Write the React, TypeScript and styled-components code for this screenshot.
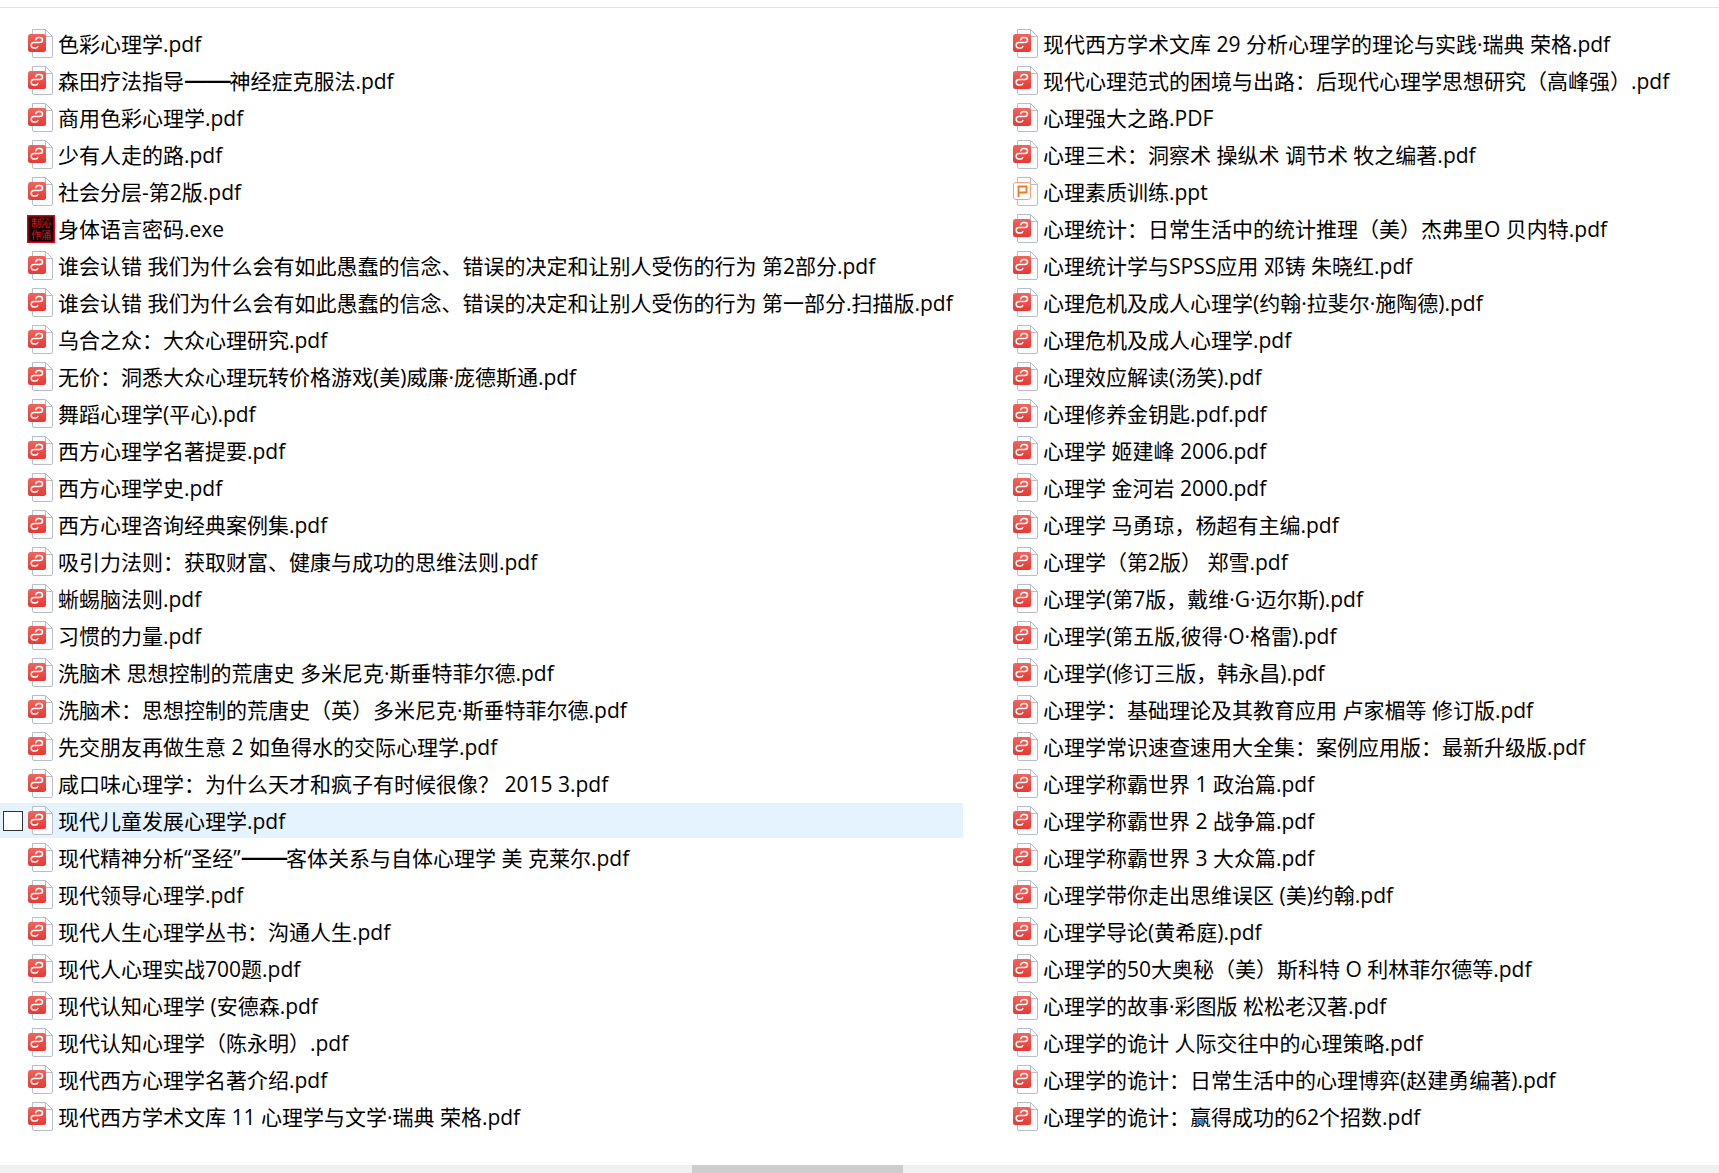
// App.tsx
import styled, { createGlobalStyle } from "styled-components";

const GlobalStyle = createGlobalStyle`
  html, body {
    margin: 0;
    padding: 0;
    background: #fff;
  }
  body {
    font-family: "Open Sans", "Noto Sans CJK SC", sans-serif;
    color: #000;
  }
`;

const leftFiles = [
  "色彩心理学.pdf",
  "森田疗法指导——神经症克服法.pdf",
  "商用色彩心理学.pdf",
  "少有人走的路.pdf",
  "社会分层-第2版.pdf",
  "身体语言密码.exe",
  "谁会认错 我们为什么会有如此愚蠢的信念、错误的决定和让别人受伤的行为 第2部分.pdf",
  "谁会认错 我们为什么会有如此愚蠢的信念、错误的决定和让别人受伤的行为 第一部分.扫描版.pdf",
  "乌合之众：大众心理研究.pdf",
  "无价：洞悉大众心理玩转价格游戏(美)威廉·庞德斯通.pdf",
  "舞蹈心理学(平心).pdf",
  "西方心理学名著提要.pdf",
  "西方心理学史.pdf",
  "西方心理咨询经典案例集.pdf",
  "吸引力法则：获取财富、健康与成功的思维法则.pdf",
  "蜥蜴脑法则.pdf",
  "习惯的力量.pdf",
  "洗脑术 思想控制的荒唐史 多米尼克·斯垂特菲尔德.pdf",
  "洗脑术：思想控制的荒唐史（英）多米尼克·斯垂特菲尔德.pdf",
  "先交朋友再做生意 2 如鱼得水的交际心理学.pdf",
  "咸口味心理学：为什么天才和疯子有时候很像？ 2015 3.pdf",
  "现代儿童发展心理学.pdf",
  "现代精神分析“圣经”——客体关系与自体心理学 美 克莱尔.pdf",
  "现代领导心理学.pdf",
  "现代人生心理学丛书：沟通人生.pdf",
  "现代人心理实战700题.pdf",
  "现代认知心理学 (安德森.pdf",
  "现代认知心理学（陈永明）.pdf",
  "现代西方心理学名著介绍.pdf",
  "现代西方学术文库 11 心理学与文学·瑞典 荣格.pdf",
];

const rightFiles = [
  "现代西方学术文库 29 分析心理学的理论与实践·瑞典 荣格.pdf",
  "现代心理范式的困境与出路：后现代心理学思想研究（高峰强）.pdf",
  "心理强大之路.PDF",
  "心理三术：洞察术 操纵术 调节术 牧之编著.pdf",
  "心理素质训练.ppt",
  "心理统计：日常生活中的统计推理（美）杰弗里O 贝内特.pdf",
  "心理统计学与SPSS应用 邓铸 朱晓红.pdf",
  "心理危机及成人心理学(约翰·拉斐尔·施陶德).pdf",
  "心理危机及成人心理学.pdf",
  "心理效应解读(汤笑).pdf",
  "心理修养金钥匙.pdf.pdf",
  "心理学 姬建峰 2006.pdf",
  "心理学 金河岩 2000.pdf",
  "心理学 马勇琼，杨超有主编.pdf",
  "心理学（第2版） 郑雪.pdf",
  "心理学(第7版，戴维·G·迈尔斯).pdf",
  "心理学(第五版,彼得·O·格雷).pdf",
  "心理学(修订三版，韩永昌).pdf",
  "心理学：基础理论及其教育应用 卢家楣等 修订版.pdf",
  "心理学常识速查速用大全集：案例应用版：最新升级版.pdf",
  "心理学称霸世界 1 政治篇.pdf",
  "心理学称霸世界 2 战争篇.pdf",
  "心理学称霸世界 3 大众篇.pdf",
  "心理学带你走出思维误区 (美)约翰.pdf",
  "心理学导论(黄希庭).pdf",
  "心理学的50大奥秘（美）斯科特 O 利林菲尔德等.pdf",
  "心理学的故事·彩图版 松松老汉著.pdf",
  "心理学的诡计 人际交往中的心理策略.pdf",
  "心理学的诡计：日常生活中的心理博弈(赵建勇编著).pdf",
  "心理学的诡计：赢得成功的62个招数.pdf",
];

const HIGHLIGHTED = "现代儿童发展心理学.pdf";

const Page = styled.div`
  height: 1173px;
  display: flex;
  flex-direction: column;
  overflow: hidden;
`;

const TopRule = styled.div`
  height: 7px;
  border-bottom: 1px solid #e2e2e2;
  flex: none;
`;

const Columns = styled.main`
  flex: 1;
  display: grid;
  grid-template-columns: 963px 1fr;
  column-gap: 22px;
  padding-top: 18px;
`;

const FileList = styled.ul`
  list-style: none;
  margin: 0;
  padding: 0;
  display: flex;
  flex-direction: column;
  gap: 2px;
`;

const Row = styled.li<{ $active?: boolean }>`
  height: 35px;
  display: flex;
  align-items: center;
  background: ${({ $active }) => ($active ? "#e5f3ff" : "transparent")};
`;

const CheckSlot = styled.span`
  width: 27px;
  flex: none;
  display: flex;
  padding-left: 3px;
  box-sizing: border-box;
`;

const CheckBox = styled.span`
  width: 20px;
  height: 20px;
  box-sizing: border-box;
  border: 1px solid #333;
  background: #fff;
`;

const IconSlot = styled.span`
  width: 31px;
  height: 30px;
  flex: none;
  display: flex;
  align-items: center;
`;

const FileName = styled.span`
  font-size: 21px;
  white-space: nowrap;
  line-height: 35px;
  padding-top: 2px;
`;

// the long dash in the reference is wider, heavier and unbroken
const Dash = styled.span`
  font-size: 25px;
  font-weight: 600;
  line-height: 1;
  letter-spacing: -2.3px;
`;

const ScrollTrack = styled.div`
  height: 8px;
  flex: none;
  background: #f0f0f0;
  padding-left: 692px;
`;

const ScrollThumb = styled.div`
  width: 211px;
  height: 100%;
  background: #cdcdcd;
`;

function PageShape() {
  return (
    <path
      d="M5.5 0.5 H18.5 L25.5 7.5 V27 Q25.5 28.5 24 28.5 H7 Q5.5 28.5 5.5 27 Z M18.5 0.5 V7.5 H25.5"
      fill="#fbfcfe"
      stroke="#b8bdca"
      strokeWidth="1"
    />
  );
}

function PdfIcon() {
  return (
    <svg width="26" height="30" viewBox="0 0 26 30">
      <defs>
        <linearGradient id="pdfRed" x1="0" y1="0" x2="0" y2="1">
          <stop offset="0" stopColor="#f2645c" />
          <stop offset="1" stopColor="#e53935" />
        </linearGradient>
      </defs>
      <PageShape />
      <rect x="1" y="5" width="18" height="18" rx="2.5" fill="url(#pdfRed)" />
      <path
        d="M8.8 10.8 Q9 8.5 11.5 8.5 H12.5 Q15.5 8.5 15.5 11 Q15.5 13.5 12.5 13.5 H7 Q4.2 13.5 4.2 16.2 Q4.2 19 7 19 H8.5 Q10.5 19 10.8 17.4"
        fill="none"
        stroke="#fff"
        strokeWidth="1.5"
        strokeLinecap="round"
        strokeLinejoin="round"
      />
    </svg>
  );
}

function PptIcon() {
  return (
    <svg width="26" height="30" viewBox="0 0 26 30">
      <PageShape />
      <rect x="1.5" y="5.5" width="17" height="17" rx="2.5" fill="#fff" stroke="#f2a572" />
      <path
        d="M6.5 20 V9.5 H14.5 V15.5 H7"
        fill="none"
        stroke="#ee7a2e"
        strokeWidth="1.8"
      />
    </svg>
  );
}

function ExeIcon() {
  return (
    <svg width="28" height="28" viewBox="0 0 28 28">
      <rect x="0.75" y="0.75" width="26.5" height="26.5" fill="#140404" stroke="#e60012" strokeWidth="1.5" />
      <text x="14" y="12" fontSize="10" fill="#d8141e" textAnchor="middle" fontFamily="'Noto Sans CJK SC', sans-serif">
        制沁
      </text>
      <text x="14" y="24" fontSize="10" fill="#d8141e" textAnchor="middle" fontFamily="'Noto Sans CJK SC', sans-serif">
        作涌
      </text>
    </svg>
  );
}

function FileIcon({ name }: { name: string }) {
  if (name.endsWith(".exe")) return <ExeIcon />;
  if (name.endsWith(".ppt")) return <PptIcon />;
  return <PdfIcon />;
}

function Label({ name }: { name: string }) {
  const [before, after] = name.split("——");
  if (after === undefined) return <FileName>{name}</FileName>;
  return (
    <FileName>
      {before}
      <Dash>——</Dash>
      {after}
    </FileName>
  );
}

function FileColumn({ files }: { files: string[] }) {
  return (
    <FileList>
      {files.map((name) => {
        const active = name === HIGHLIGHTED;
        return (
          <Row key={name} $active={active}>
            <CheckSlot>{active && <CheckBox />}</CheckSlot>
            <IconSlot>
              <FileIcon name={name} />
            </IconSlot>
            <Label name={name} />
          </Row>
        );
      })}
    </FileList>
  );
}

export default function App() {
  return (
    <Page>
      <GlobalStyle />
      <TopRule />
      <Columns>
        <FileColumn files={leftFiles} />
        <FileColumn files={rightFiles} />
      </Columns>
      <ScrollTrack>
        <ScrollThumb />
      </ScrollTrack>
    </Page>
  );
}
